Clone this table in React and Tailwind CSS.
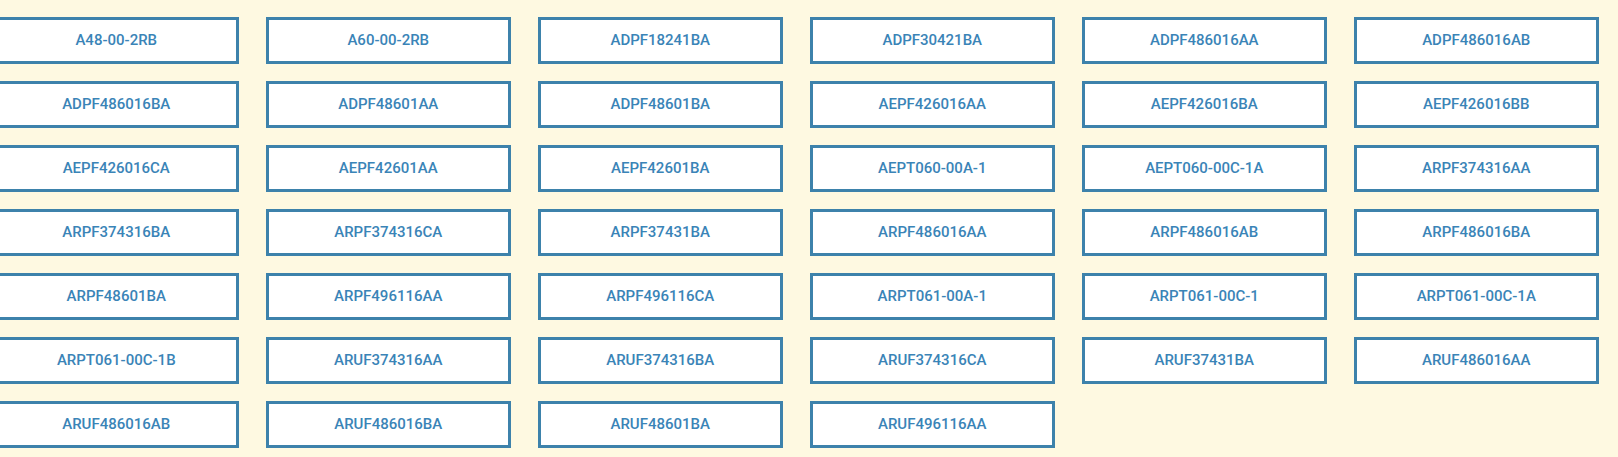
const items = [
  "A48-00-2RB","A60-00-2RB","ADPF18241BA","ADPF30421BA","ADPF486016AA","ADPF486016AB",
  "ADPF486016BA","ADPF48601AA","ADPF48601BA","AEPF426016AA","AEPF426016BA","AEPF426016BB",
  "AEPF426016CA","AEPF42601AA","AEPF42601BA","AEPT060-00A-1","AEPT060-00C-1A","ARPF374316AA",
  "ARPF374316BA","ARPF374316CA","ARPF37431BA","ARPF486016AA","ARPF486016AB","ARPF486016BA",
  "ARPF48601BA","ARPF496116AA","ARPF496116CA","ARPT061-00A-1","ARPT061-00C-1","ARPT061-00C-1A",
  "ARPT061-00C-1B","ARUF374316AA","ARUF374316BA","ARUF374316CA","ARUF37431BA","ARUF486016AA",
  "ARUF486016AB","ARUF486016BA","ARUF48601BA","ARUF496116AA",
];

export default function App() {
  return (
    <div className="w-[1618px] h-[457px] overflow-hidden bg-[#fef9e1] pt-[17px]" style={{ fontFamily: "Roboto, 'Liberation Sans', sans-serif" }}>
      <div className="-ml-[6px] grid grid-cols-[repeat(6,244.5px)] gap-x-[27.5px] gap-y-[17px]">
        {items.map((t) => (
          <div key={t} className="h-[47px] border-[3px] border-[#3d82ab] bg-white flex items-center justify-center text-[15px] font-medium text-[#3a84b7]">
            {t}
          </div>
        ))}
      </div>
    </div>
  );
}
